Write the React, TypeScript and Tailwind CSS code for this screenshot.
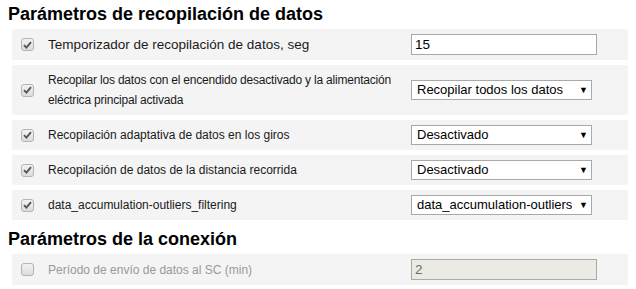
import React from 'react'

type Row = {
  label: string
  kind: 'input' | 'select'
  value: string
  checked: boolean
  disabled?: boolean
  size: string
}

const collect: Row[] = [
  { label: 'Temporizador de recopilación de datos, seg', kind: 'input', value: '15', checked: true, size: 'text-[13.5px]' },
  {
    label: 'Recopilar los datos con el encendido desactivado y la alimentación eléctrica principal activada',
    kind: 'select',
    value: 'Recopilar todos los datos',
    checked: true,
    size: 'text-[12px] tracking-[-0.2px]',
  },
  { label: 'Recopilación adaptativa de datos en los giros', kind: 'select', value: 'Desactivado', checked: true, size: 'text-[12px]' },
  { label: 'Recopilación de datos de la distancia recorrida', kind: 'select', value: 'Desactivado', checked: true, size: 'text-[12px]' },
  { label: 'data_accumulation-outliers_filtering', kind: 'select', value: 'data_accumulation-outliers', checked: true, size: 'text-[12px]' },
]

const connection: Row[] = [
  { label: 'Período de envío de datos al SC (min)', kind: 'input', value: '2', checked: false, disabled: true, size: 'text-[12px]' },
]

function Check({ checked }: { checked: boolean }) {
  return (
    <div className='w-[13px] h-[13px] shrink-0 rounded-[3px] border border-[#b4b4b4] bg-gradient-to-b from-[#f2f2f2] to-[#dcdcdc] flex items-center justify-center'>
      {checked && (
        <svg width='9' height='8' viewBox='0 0 9 8'>
          <path d='M1 4.2 L3.4 6.6 L8 1.2' fill='none' stroke='#555' strokeWidth='1.9' />
        </svg>
      )}
    </div>
  )
}

function Control({ row }: { row: Row }) {
  if (row.kind === 'input') {
    return (
      <div
        className={
          'w-[186px] h-[21px] border border-[#a9a9a9] px-[3px] flex items-center text-[13.5px] leading-[16px] ' +
          (row.disabled ? 'bg-[#ebebe4] text-[#6d6d6d]' : 'bg-white text-black')
        }
      >
        {row.value}
      </div>
    )
  }
  return (
    <div className='w-[181px] h-[20px] border border-[#a9a9a9] bg-white pl-[5px] pr-[3px] flex items-center justify-between text-[13px] leading-[16px] text-black'>
      <span className='overflow-hidden whitespace-nowrap'>{row.value}</span>
      <span className='text-[9px] ml-[2px]'>▼</span>
    </div>
  )
}

function Line({ row }: { row: Row }) {
  return (
    <div className='flex items-center bg-[#f4f4f4] py-[5px] pl-[9px] mb-[5px]'>
      <Check checked={row.checked} />
      <div
        className={
          'ml-[14px] w-[363px] pr-[4px] leading-[20px] ' +
          row.size +
          (row.disabled ? ' text-[#999]' : ' text-[#1a1a1a]')
        }
      >
        {row.label}
      </div>
      <Control row={row} />
    </div>
  )
}

export default function App() {
  return (
    <main className='w-[636px] h-[289px] bg-white pl-[8px] pr-[8px] font-["Liberation_Sans",Arial,sans-serif]'>
      <h1 className='pt-[3px] pb-[4px] text-[18px] leading-[22px] font-bold text-black'>Parámetros de recopilación de datos</h1>
      <section className='ml-[4px]'>
        {collect.map((r, i) => (
          <Line key={i} row={r} />
        ))}
      </section>
      <h1 className='mt-[8px] mb-[4px] text-[18px] leading-[22px] font-bold text-black'>Parámetros de la conexión</h1>
      <section className='ml-[4px]'>
        {connection.map((r, i) => (
          <Line key={i} row={r} />
        ))}
      </section>
    </main>
  )
}
